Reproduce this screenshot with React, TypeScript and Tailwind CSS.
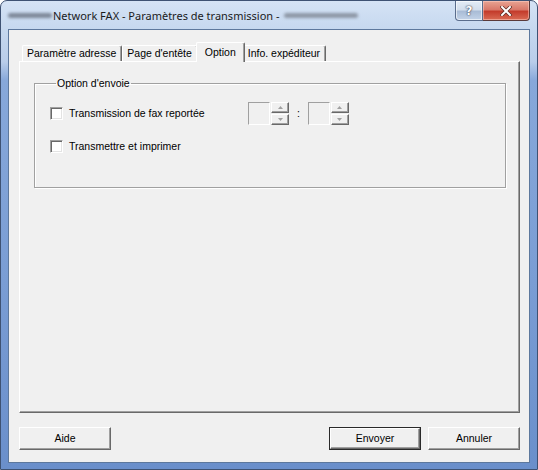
import React from 'react';

const dlg = "font-['Liberation_Sans',Arial,sans-serif] text-[10.5px] text-black";

function TitleButtons() {
  return (
    <div className="flex self-start mr-[7px]">
      <div className="w-[28px] h-[20px] rounded-bl-[4px] border border-t-0 border-[#5a6d8c] bg-[linear-gradient(180deg,#e4ecf6_0%,#d3deec_45%,#a9bcd6_55%,#c3d3e8_100%)] flex items-center justify-center shadow-[inset_0_0_0_1px_rgba(255,255,255,0.6)]">
        <span className="font-['DejaVu_Sans',sans-serif] font-bold text-[12px] leading-none text-white [text-shadow:0_0_1px_#334,0_0_2px_#445]">?</span>
      </div>
      <div className="w-[47px] h-[20px] rounded-br-[4px] border border-t-0 border-l-0 border-[#5a3a3a] bg-[linear-gradient(180deg,#e8a493_0%,#d9796a_45%,#c43c2c_55%,#d96b54_100%)] flex items-center justify-center shadow-[inset_0_0_0_1px_rgba(255,210,200,0.5)]">
        <svg width="12" height="10" viewBox="0 0 12 10">
          <path d="M2 1 L10 9 M10 1 L2 9" stroke="#5a2a22" strokeWidth="3.4" strokeLinecap="square" />
          <path d="M2 1 L10 9 M10 1 L2 9" stroke="#ffffff" strokeWidth="2" strokeLinecap="square" />
        </svg>
      </div>
    </div>
  );
}

function Tab({ label, selected }: { label: string; selected?: boolean }) {
  if (selected) {
    return (
      <div className="relative z-10 -mx-[2px] -mb-px h-[20px] px-[8px] pt-[2px] bg-[#f0f0f0] border-t border-l border-white border-r border-r-[#696969] shadow-[inset_-1px_0_0_#a0a0a0] rounded-t-[2px]">
        {label}
      </div>
    );
  }
  return (
    <div className="h-[16px] pl-[4px] pr-[5px] bg-[#f0f0f0] border-t border-l border-white border-r border-r-[#696969] shadow-[inset_-1px_0_0_#a0a0a0] rounded-t-[2px] leading-[15px]">
      {label}
    </div>
  );
}

function CheckBox({ label }: { label: string }) {
  return (
    <div className="flex items-center gap-[6px]">
      <div className="w-[13px] h-[13px] bg-white border border-t-[#a0a0a0] border-l-[#a0a0a0] border-b-white border-r-white shadow-[inset_1px_1px_0_#696969,inset_-1px_-1px_0_#e3e3e3]" />
      <span>{label}</span>
    </div>
  );
}

function Arrow({ up }: { up?: boolean }) {
  return (
    <svg width="5" height="3" viewBox="0 0 5 3">
      <path d={up ? 'M2.5 0 L5 3 L0 3 Z' : 'M0 0 L5 0 L2.5 3 Z'} fill="#a0a0a0" />
    </svg>
  );
}

function SpinBox() {
  return (
    <div className="flex h-[23px]">
      <div className="w-[22px] h-[23px] bg-[#f0f0f0] border border-t-[#a0a0a0] border-l-[#a0a0a0] border-b-white border-r-white" />
      <div className="flex flex-col gap-px ml-px">
        <div className="w-[18px] h-[11px] flex items-center justify-center bg-[#f0f0f0] border border-t-white border-l-white border-b-[#696969] border-r-[#696969] shadow-[inset_-1px_-1px_0_#a0a0a0]">
          <Arrow up />
        </div>
        <div className="w-[18px] h-[11px] flex items-center justify-center bg-[#f0f0f0] border border-t-white border-l-white border-b-[#696969] border-r-[#696969] shadow-[inset_-1px_-1px_0_#a0a0a0]">
          <Arrow />
        </div>
      </div>
    </div>
  );
}

function Btn({ label, primary }: { label: string; primary?: boolean }) {
  if (primary) {
    return (
      <div className="w-[92px] h-[23px] border border-[#2a2a2a] bg-[#f0f0f0]">
        <div className="w-full h-full flex items-center justify-center border border-t-white border-l-white border-b-[#696969] border-r-[#696969] shadow-[inset_-1px_-1px_0_#a0a0a0]">
          {label}
        </div>
      </div>
    );
  }
  return (
    <div className="w-[92px] h-[23px] flex items-center justify-center bg-[#f0f0f0] border border-t-white border-l-white border-b-[#696969] border-r-[#696969] shadow-[inset_-1px_-1px_0_#a0a0a0]">
      {label}
    </div>
  );
}

export default function App() {
  return (
    <div className="w-[538px] h-[470px] rounded-t-[7px] border border-[#3e5273] bg-[linear-gradient(180deg,#d5e3f5_0%,#c6d8ef_6%,#b9cdea_13%,#87a8da_17%,#7a9dd4_60%,#6a8fcb_100%)] flex flex-col overflow-hidden">
      {/* Title bar */}
      <div className="h-[28px] flex items-center">
        <div className="w-[44px] h-[5px] ml-[7px] mt-[1px] bg-[#7d8899] blur-[1.5px] rounded-full" />
        <span className="ml-[1px] font-['Noto_Sans',sans-serif] text-[11px] text-[#1b1b1b] leading-none">
          Network FAX - Paramètres de transmission -
        </span>
        <div className="w-[74px] h-[5px] ml-[4px] mt-[1px] bg-[#8d97a6] blur-[1.5px] rounded-full" />
        <div className="flex-1" />
        <TitleButtons />
      </div>

      {/* Client area */}
      <div className={`ml-[7px] w-[522px] h-[434px] border border-[#5d789d] bg-[#f0f0f0] flex flex-col pl-[10px] pr-[9px] pt-[12px] ${dlg}`}>
        <div className="flex items-end pl-[3px] h-[19px]">
          <Tab label="Paramètre adresse" />
          <Tab label="Page d'entête" />
          <Tab label="Option" selected />
          <Tab label="Info. expéditeur" />
        </div>

        <div className="h-[352px] border border-t-white border-l-white border-b-[#696969] border-r-[#696969] shadow-[inset_-1px_-1px_0_#a0a0a0] pt-[15px] pl-[14px] pr-[13px]">
          <fieldset className="h-[111px] border border-[#a0a0a0] shadow-[inset_1px_1px_0_white,1px_1px_0_white] pl-[15px] pt-[12px]">
            <legend className="ml-[6px] px-[1px] leading-[13px]">Option d'envoie</legend>
            <div className="flex items-center h-[23px]">
              <div className="w-[198px]">
                <CheckBox label="Transmission de fax reportée" />
              </div>
              <SpinBox />
              <span className="mx-[8px]">:</span>
              <SpinBox />
            </div>
            <div className="mt-[14px]">
              <CheckBox label="Transmettre et imprimer" />
            </div>
          </fieldset>
        </div>

        <div className="flex mt-[14px]">
          <Btn label="Aide" />
          <div className="flex-1" />
          <Btn label="Envoyer" primary />
          <div className="w-[7px]" />
          <Btn label="Annuler" />
        </div>
      </div>
    </div>
  );
}
